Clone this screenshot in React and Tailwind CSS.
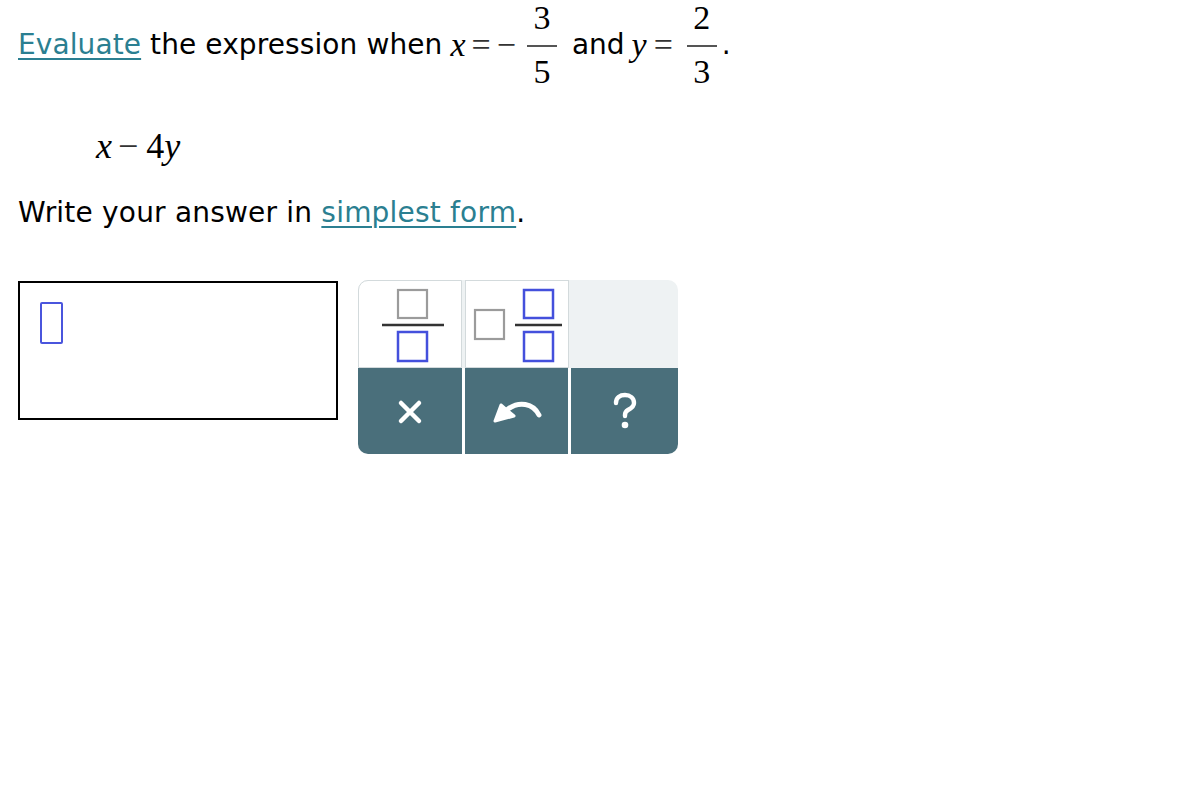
import React from "react";

const SANS = "font-['DejaVu_Sans',Verdana,sans-serif]";
const SERIF = "font-['Liberation_Serif','Times_New_Roman',serif]";

function Frac({ num, den, className = "" }) {
  return (
    <span className={`flex flex-col items-center w-[30px] ${className}`}>
      <span className={`${SERIF} text-[34px] leading-[34px] h-[38px] text-black`}>{num}</span>
      <span className="mt-[6px] h-[2px] w-[30px] bg-[#555]" />
      <span className={`${SERIF} text-[34px] leading-[34px] h-[34px] mt-[8px] text-black`}>{den}</span>
    </span>
  );
}

export default function App() {
  return (
    <div className={`${SANS} bg-white w-[1196px] h-[800px] text-black`}>
      {/* Line 1 */}
      <div className="flex items-center h-[90px] pl-[18px]">
        <span className="text-[28px] leading-[32px] tracking-[0.1px] whitespace-pre">
          <a className="text-[#2b7f91] underline underline-offset-[4px] decoration-[2px]">Evaluate</a>
          {" the expression when"}
        </span>
        <span className={`${SERIF} italic text-[34px] leading-[32px] ml-[8px]`}>x</span>
        <span className={`${SERIF} text-[34px] leading-[32px] ml-[6px] text-[#333]`}>=</span>
        <span className={`${SERIF} text-[34px] leading-[32px] ml-[6px] text-[#333]`}>−</span>
        <Frac num="3" den="5" className="ml-[11px]" />
        <span className="text-[28px] leading-[32px] ml-[15px]">and</span>
        <span className={`${SERIF} italic text-[34px] leading-[32px] ml-[7px]`}>y</span>
        <span className={`${SERIF} text-[34px] leading-[32px] ml-[7px] text-[#333]`}>=</span>
        <Frac num="2" den="3" className="ml-[14px]" />
        <span className="text-[28px] leading-[32px] ml-[5px]">.</span>
      </div>

      {/* Expression */}
      <div className={`${SERIF} text-[36px] leading-[40px] h-[40px] mt-[36px] pl-[96px] flex items-center`}>
        <span className="italic">x</span>
        <span className="ml-[6px] text-[#333]">−</span>
        <span className="ml-[8px]">4</span>
        <span className="italic">y</span>
      </div>

      {/* Instruction */}
      <div className="text-[28px] leading-[32px] tracking-[0.2px] mt-[31px] pl-[18px]">
        Write your answer in{" "}
        <a className="text-[#2b7f91] underline underline-offset-[4px] decoration-[2px]">simplest form</a>.
      </div>

      {/* Answer row */}
      <div className="flex items-start gap-[20px] pl-[18px] mt-[51px]">
        <div className="mt-[1px] w-[320px] h-[139px] border-2 border-black pl-[20px] pt-[19px]">
          <div className="w-[23px] h-[42px] border-[2.5px] border-[#4a55dd] rounded-[2px]" />
        </div>

        <div className="w-[320px] flex flex-col">
          <div className="h-[88px] bg-[#eef2f3] rounded-t-[10px] flex gap-[3px]">
            <div className="w-[104px] h-[88px] bg-white border border-[#d3dadc] rounded-tl-[10px]">
              <svg width="102" height="86" viewBox="0 0 102 86">
                <rect x="39" y="9" width="29" height="28" fill="none" stroke="#9b9b9b" strokeWidth="2.2" />
                <line x1="23" y1="44" x2="85" y2="44" stroke="#333" strokeWidth="2.5" />
                <rect x="39" y="51" width="29" height="29" fill="none" stroke="#4450dc" strokeWidth="2.5" />
              </svg>
            </div>
            <div className="w-[104px] h-[88px] bg-white border border-[#d3dadc]">
              <svg width="102" height="86" viewBox="0 0 102 86">
                <rect x="9" y="29" width="29" height="29" fill="none" stroke="#9b9b9b" strokeWidth="2.2" />
                <rect x="58" y="9" width="29" height="28" fill="none" stroke="#4450dc" strokeWidth="2.5" />
                <line x1="49" y1="44" x2="96" y2="44" stroke="#333" strokeWidth="2.5" />
                <rect x="58" y="51" width="29" height="29" fill="none" stroke="#4450dc" strokeWidth="2.5" />
              </svg>
            </div>
          </div>
          <div className="h-[86px] grid grid-cols-[104px_103px_107px] gap-[3px] bg-white">
            <div className="bg-[#4a6f7b] rounded-bl-[10px] flex items-center justify-center">
              <svg width="26" height="26" viewBox="0 0 26 26" className="mt-[2px]">
                <path d="M4 4 L22 22 M22 4 L4 22" stroke="white" strokeWidth="4.5" strokeLinecap="round" />
              </svg>
            </div>
            <div className="bg-[#4a6f7b] flex items-center justify-center">
              <svg width="52" height="26" viewBox="0 0 52 26" className="ml-[2px]">
                <path d="M47 17 C41 5, 27 3, 16 11" fill="none" stroke="white" strokeWidth="5" strokeLinecap="round" />
                <path d="M3 23 L9 7 L22 18 Z" fill="white" stroke="white" strokeWidth="3" strokeLinejoin="round" />
              </svg>
            </div>
            <div className="bg-[#4a6f7b] rounded-br-[10px] flex items-center justify-center">
              <svg width="28" height="38" viewBox="0 0 28 38">
                <path d="M5 11 C5 5.5, 9 3, 14 3 C19 3, 23 6, 23 11 C23 15, 19.5 16.5, 17 18 C15 19.2, 14 20.5, 14 23 V24" fill="none" stroke="white" strokeWidth="4.4" strokeLinecap="round" />
                <circle cx="14" cy="33" r="3.3" fill="white" />
              </svg>
            </div>
          </div>
        </div>
      </div>
    </div>
  );
}
